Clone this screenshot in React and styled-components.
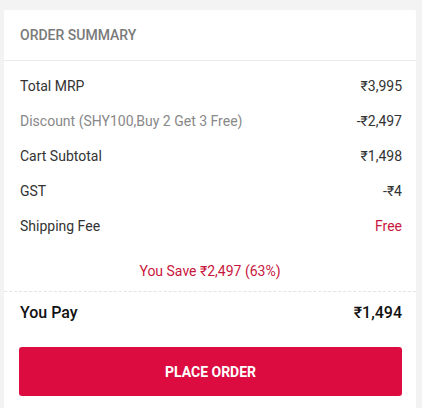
import styled, { createGlobalStyle } from "styled-components";

const GlobalStyle = createGlobalStyle`
  body {
    margin: 0;
    background: #f3f3f3;
    font-family: Roboto, "Liberation Sans", sans-serif;
  }
`

const rows = [
  { label: "Total MRP", value: "₹3,995" },
  { label: "Discount (SHY100,Buy 2 Get 3 Free)", value: "-₹2,497", muted: true },
  { label: "Cart Subtotal", value: "₹1,498" },
  { label: "GST", value: "-₹4" },
  { label: "Shipping Fee", value: "Free", accent: true },
];

function App() {
  return (
    <Page>
      <GlobalStyle />
      <Card>
        <Header>ORDER SUMMARY</Header>
        <List>
          {rows.map((r) => (
            <Row key={r.label}>
              <Label $muted={r.muted}>{r.label}</Label>
              <Value $accent={r.accent}>{r.value}</Value>
            </Row>
          ))}
        </List>
        <Savings>You Save ₹2,497 (63%)</Savings>
        <Total>
          <span>You Pay</span>
          <span>₹1,494</span>
        </Total>
        <Footer>
          <PlaceButton>PLACE ORDER</PlaceButton>
        </Footer>
      </Card>
    </Page>
  )
}

const Page = styled.div`
  padding: 10px 6px 0 4px;
`
const Card = styled.div`
  width: 412px;
  background: #fff;
  border-radius: 2px 2px 0 0;
  min-height: 398px;
`
const Header = styled.div`
  height: 50px;
  display: flex;
  align-items: center;
  padding: 0 16px;
  border-bottom: 1px solid #ebebeb;
  color: #7a7a7a;
  font-size: 14px;
  font-weight: 500;
`
const List = styled.div`
  padding: 7px 14px 0 16px;
`
const Row = styled.div`
  height: 35px;
  display: flex;
  align-items: center;
  justify-content: space-between;
  font-size: 14px;
`
const Label = styled.span`
  color: ${(p) => (p.$muted ? "#888" : "#333")};
`
const Value = styled.span`
  color: ${(p) => (p.$accent ? "#c8173e" : "#333")};
`
const Savings = styled.div`
  padding: 18px 0 10px;
  line-height: 20px;
  text-align: center;
  color: #c8173e;
  font-size: 14px;
  border-bottom: 1px dashed #e4e4e4;
`
const Total = styled.div`
  height: 40px;
  display: flex;
  align-items: center;
  justify-content: space-between;
  padding: 0 14px 0 16px;
  font-size: 16px;
  font-weight: 500;
  color: #111;
`
const Footer = styled.div`
  padding: 15px 14px 0 15px;
`
const PlaceButton = styled.button`
  width: 100%;
  height: 49px;
  border: none;
  border-radius: 3px;
  background: #dc0c41;
  color: #fff;
  font-family: Roboto, "Liberation Sans", sans-serif;
  font-size: 14px;
  font-weight: 700;
  cursor: pointer;
`

export default App;
